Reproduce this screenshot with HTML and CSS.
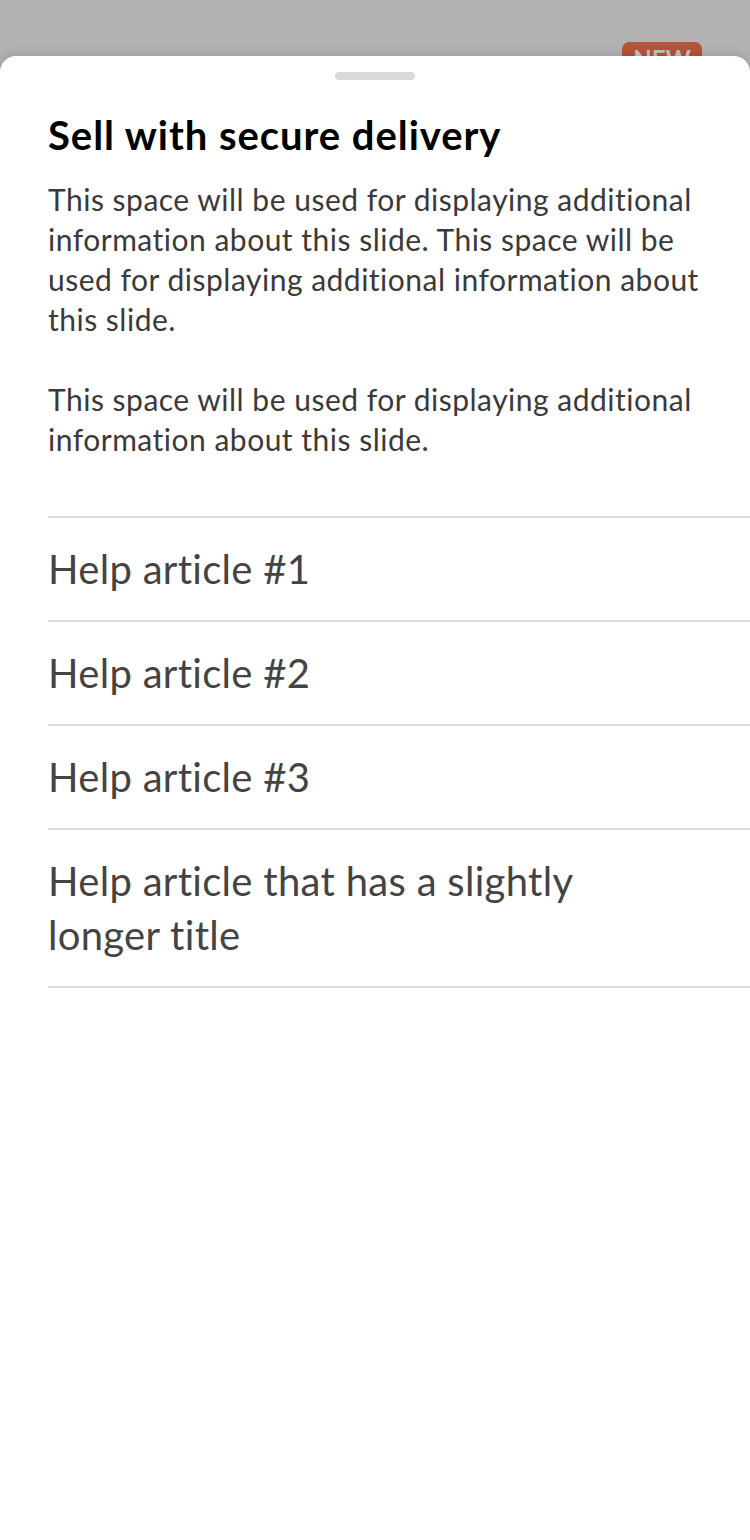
FILE: index.html
```html
<!DOCTYPE html>
<html lang="en">
<head>
<meta charset="utf-8">
<title>Sell with secure delivery</title>
<link rel="stylesheet" href="styles.css">
</head>
<body>
<div class="backdrop">
  <span class="badge">NEW</span>
</div>
<section class="sheet">
  <div class="handle"></div>
  <div class="content">
    <h1 class="title">Sell with secure delivery</h1>
    <p class="text">This space will be used for displaying additional information about this slide. This space will be used for displaying additional information about this slide.</p>
    <p class="text">This space will be used for displaying additional information about this slide.</p>
  </div>
  <ul class="articles">
    <li class="article">Help article #1</li>
    <li class="article">Help article #2</li>
    <li class="article">Help article #3</li>
    <li class="article">Help article that has a slightly longer title</li>
  </ul>
</section>
</body>
</html>
```

FILE: styles.css
```css
* { box-sizing: border-box; }
html, body {
  margin: 0;
  padding: 0;
  background: #b2b2b2;
  font-family: "Lato", "Noto Sans", sans-serif;
}
.backdrop {
  height: 56px;
  position: relative;
}
.badge {
  position: absolute;
  left: 622px;
  top: 42px;
  width: 80px;
  height: 34px;
  border-radius: 7px;
  background: #b4553a;
  color: #c4c4c4;
  font-weight: 700;
  font-size: 24px;
  line-height: 34px;
  text-align: center;
}
.sheet {
  position: relative;
  background: #fff;
  border-radius: 16px 16px 0 0;
  box-shadow: 0 -2px 10px rgba(0,0,0,0.12);
  min-height: 1484px;
  padding-top: 16px;
}
.handle {
  width: 80px;
  height: 8px;
  border-radius: 4px;
  background: #d9d9d9;
  margin: 0 auto;
}
.content {
  padding: 31px 48px 0;
}
.title {
  margin: 0 0 20px;
  font-size: 40px;
  line-height: 48px;
  font-weight: 700;
  letter-spacing: 0.95px;
  color: #000;
}
.text {
  margin: 0 0 40px;
  font-size: 30px;
  line-height: 40px;
  letter-spacing: 0.5px;
  color: #3a3a3a;
}
.text:last-child {
  margin-bottom: 57px;
}
.articles {
  list-style: none;
  margin: 0 0 0 48px;
  padding: 0;
  border-top: 2px solid #dcdcdc;
}
.article {
  padding: 24px 120px 24px 0;
  border-bottom: 2px solid #dcdcdc;
  font-size: 40px;
  line-height: 54px;
  letter-spacing: 0.3px;
  color: #444;
}
```
